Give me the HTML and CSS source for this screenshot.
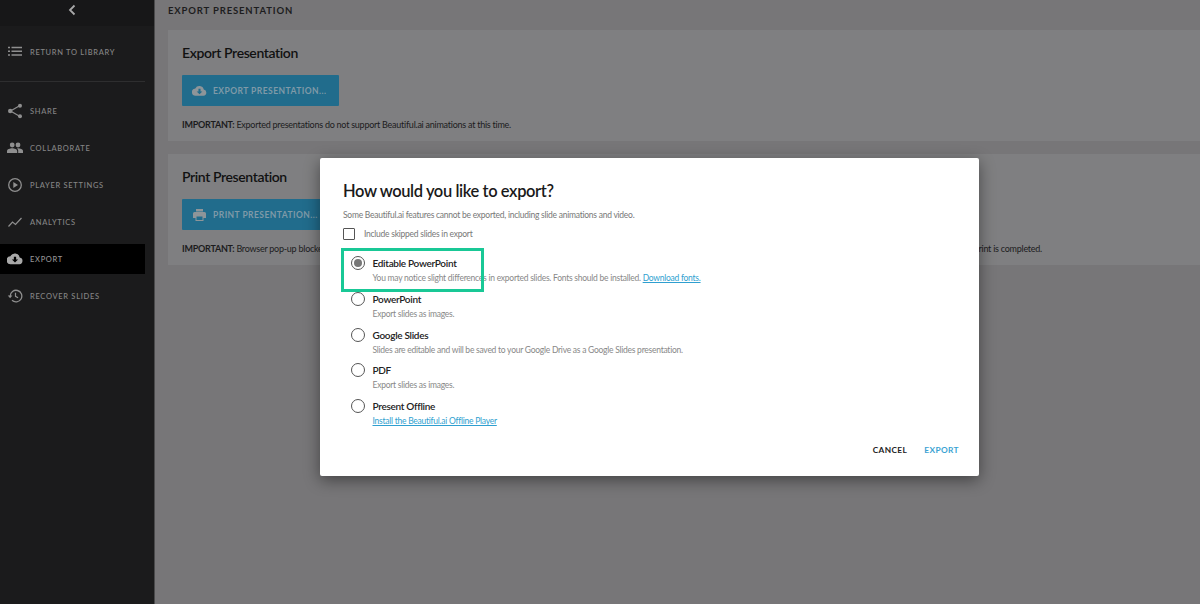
FILE: index.html
```html
<!DOCTYPE html>
<html>
<head>
    <title>Export Presentation</title>
    <link rel="stylesheet" href="styles.css">
</head>
<body>
    <div class="app">
        <div class="sidebar">
            <div class="back">
                <svg width="10" height="12" viewBox="0 0 10 12"><path d="M7.500 1.500 3 6l4.500 4.500" fill="none" stroke="#a8a8a8" stroke-width="1.800"/></svg>
            </div>
            <a class="nav-item top-item">
                <svg width="14" height="14" viewBox="0 0 14 14"><path d="M0 2.500h2M3.500 2.500H14M0 6.200h2M3.500 6.200H14M0 10h2M3.500 10H14" stroke="#8f8f8f" stroke-width="1.500"/></svg>
                <span>Return to Library</span>
            </a>
            <div class="divider"></div>
            <a class="nav-item">
                <svg width="16" height="16" viewBox="0 0 16 16"><path d="M13 2.500 3.500 8l9.500 5.500" fill="none" stroke="#8f8f8f" stroke-width="1.200"/><circle cx="13" cy="2.800" r="2" fill="#8f8f8f"/><circle cx="3.200" cy="8" r="2.200" fill="#8f8f8f"/><circle cx="13" cy="13.200" r="2" fill="#8f8f8f"/></svg>
                <span>Share</span>
            </a>
            <a class="nav-item">
                <svg width="16" height="16" viewBox="0 0 16 16"><circle cx="5.200" cy="5" r="2.400" fill="#8f8f8f"/><circle cx="11" cy="5" r="2.400" fill="#8f8f8f"/><path d="M0 13v-2c0-1.800 3-2.800 5.200-2.800s5 1 5 2.800v2zM11.200 13v-2.200c0-1-.5-1.800-1.200-2.500 2.500-.3 6 .6 6 2.500v2.200z" fill="#8f8f8f"/></svg>
                <span>Collaborate</span>
            </a>
            <a class="nav-item">
                <svg width="16" height="16" viewBox="0 0 16 16"><circle cx="8" cy="8" r="6.300" fill="none" stroke="#8f8f8f" stroke-width="1.300"/><path d="M6.300 5v6L11 8z" fill="#8f8f8f"/></svg>
                <span>Player Settings</span>
            </a>
            <a class="nav-item">
                <svg width="16" height="16" viewBox="0 0 16 16"><path d="M1.500 12.500 5.500 8l3 2.500 6-6.500" fill="none" stroke="#8f8f8f" stroke-width="1.200"/></svg>
                <span>Analytics</span>
            </a>
            <a class="nav-item active">
                <svg width="17" height="14" viewBox="0 0 17 14"><path d="M13.500 5.300A5.300 5.300 0 0 0 3.600 4 4.300 4.300 0 0 0 4.300 12.600h8.900a3.700 3.700 0 0 0 .3-7.300z" fill="#a8a8a8"/><path d="M7.300 4.500h2.400v3h2.100L8.500 10.800 5.200 7.500h2.100z" fill="#000"/></svg>
                <span>Export</span>
            </a>
            <a class="nav-item">
                <svg width="16" height="16" viewBox="0 0 16 16"><path d="M3.200 8a5.800 5.800 0 1 1 1.800 4.300" fill="none" stroke="#8f8f8f" stroke-width="1.300"/><path d="M.8 7.500h4.600L3.100 10.300z" fill="#8f8f8f"/><path d="M8.500 4.800v3.500l2.600 1.500" fill="none" stroke="#8f8f8f" stroke-width="1.200"/></svg>
                <span>Recover Slides</span>
            </a>
        </div>

        <div class="main">
            <div class="page-title">Export Presentation</div>
            <div class="card">
                <h2>Export Presentation</h2>
                <div class="big-button">
                    <svg width="15" height="12" viewBox="0 0 17 14"><path d="M13.500 5.300A5.300 5.300 0 0 0 3.600 4 4.300 4.300 0 0 0 4.300 12.600h8.900a3.700 3.700 0 0 0 .3-7.300z" fill="#8e9599"/><path d="M7.300 4.500h2.400v3h2.100L8.500 10.800 5.200 7.500h2.100z" fill="#216c8c"/></svg>
                    <span>Export Presentation...</span>
                </div>
                <p><b>IMPORTANT:</b> Exported presentations do not support Beautiful.ai animations at this time.</p>
            </div>
            <div class="card">
                <h2>Print Presentation</h2>
                <div class="big-button">
                    <svg width="13" height="12" viewBox="0 0 13 12"><path d="M3 0h7v2.500H3zM1.500 3h10A1.500 1.500 0 0 1 13 4.500V9h-2.500v3h-8V9H0V4.500A1.500 1.500 0 0 1 1.500 3z" fill="#8e9599"/><path d="M3.500 7.500h6v3.500h-6z" fill="#216c8c"/></svg>
                    <span>Print Presentation...</span>
                </div>
                <p class="print-note"><span><b>IMPORTANT:</b> Browser pop-up blockers may prevent this from opening.</span><span>Print is completed.</span></p>
            </div>
        </div>
    </div>

    <div class="dialog">
        <h1>How would you like to export?</h1>
        <div class="intro">Some Beautiful.ai features cannot be exported, including slide animations and video.</div>
        <label class="check-row"><span class="checkbox"></span>Include skipped slides in export</label>
        <div class="option">
            <span class="radio selected"></span>
            <div>
                <div class="option-name">Editable PowerPoint</div>
                <div class="option-desc">You may notice slight differences in exported slides. Fonts should be installed. <a>Download fonts.</a></div>
            </div>
        </div>
        <div class="option">
            <span class="radio"></span>
            <div>
                <div class="option-name">PowerPoint</div>
                <div class="option-desc">Export slides as images.</div>
            </div>
        </div>
        <div class="option">
            <span class="radio"></span>
            <div>
                <div class="option-name">Google Slides</div>
                <div class="option-desc">Slides are editable and will be saved to your Google Drive as a Google Slides presentation.</div>
            </div>
        </div>
        <div class="option">
            <span class="radio"></span>
            <div>
                <div class="option-name">PDF</div>
                <div class="option-desc">Export slides as images.</div>
            </div>
        </div>
        <div class="option">
            <span class="radio"></span>
            <div>
                <div class="option-name">Present Offline</div>
                <div class="option-desc"><a>Install the Beautiful.ai Offline Player</a></div>
            </div>
        </div>
        <div class="actions">
            <span class="cancel">Cancel</span>
            <span class="export">Export</span>
        </div>
        <div class="highlight"></div>
    </div>
</body>
</html>
```

FILE: styles.css
```css
* {
    box-sizing: border-box;
}
body {
    margin: 0;
    height: 604px;
    overflow: hidden;
    font-family: Lato, sans-serif;
    background: #777678;
}
.app {
    display: flex;
    height: 604px;
}
.sidebar {
    width: 155px;
    flex: none;
    background: #1b1b1c;
    border-right: 1px solid #4a4a4b;
}
.back {
    height: 26px;
    padding-left: 67px;
    background: #171718;
}
.nav-item {
    display: flex;
    align-items: center;
    gap: 7px;
    height: 30px;
    margin-bottom: 7px;
    padding-left: 7px;
    width: 145px;
    color: #858585;
    font-size: 7.500px;
    font-weight: 500;
    letter-spacing: 0.700px;
    text-transform: uppercase;
}
.nav-item svg {
    width: 16px;
    flex: none;
}
.nav-item.active {
    background: #000;
    color: #959595;
}
.top-item {
    margin-top: 11px;
    margin-bottom: 0;
}
.divider {
    width: 145px;
    height: 1px;
    margin: 14px 0 14px;
    background: #2e2e2f;
}
.main {
    flex: 1;
    padding-left: 13px;
    min-width: 0;
}
.page-title {
    height: 30px;
    padding-top: 5px;
    color: #1d1d1e;
    font-size: 9.500px;
    font-weight: 700;
    letter-spacing: 0.850px;
    text-transform: uppercase;
}
.card {
    height: 111px;
    margin-bottom: 13px;
    padding: 13px 0 0 14px;
    background: #7f7f81;
}
.card h2 {
    margin: 0 0 12px;
    color: #111;
    font-size: 14px;
    font-weight: 600;
    letter-spacing: -0.400px;
    line-height: 20px;
}
.big-button {
    display: flex;
    align-items: center;
    gap: 6px;
    width: 157px;
    height: 31px;
    padding-left: 10px;
    border-radius: 1px;
    background: #216c8c;
    color: #7f9aa8;
    font-size: 8.500px;
    font-weight: 700;
    letter-spacing: 0.450px;
    text-transform: uppercase;
    white-space: nowrap;
}
.big-button svg {
    width: 15px;
    flex: none;
}
.card p {
    margin: 12px 0 0;
    color: #1c1c1d;
    font-size: 9px;
    letter-spacing: -0.250px;
    line-height: 14px;
}
.card p b {
    font-weight: 700;
}
.print-note {
    display: flex;
    justify-content: space-between;
    padding-right: 158px;
}
.dialog {
    position: absolute;
    left: 319.500px;
    top: 158px;
    width: 659.500px;
    height: 318px;
    padding: 23px 23.500px 0;
    border-radius: 2px;
    background: #fff;
    box-shadow: 0 4px 16px rgba(0, 0, 0, 0.45);
}
.dialog h1 {
    margin: 0;
    color: #1a1a1a;
    font-size: 16.500px;
    font-weight: 600;
    letter-spacing: -0.400px;
    line-height: 20px;
}
.intro {
    margin-top: 8px;
    color: #777;
    font-size: 8.500px;
    letter-spacing: -0.250px;
    line-height: 12px;
}
.check-row {
    display: flex;
    align-items: center;
    gap: 9px;
    margin-top: 7px;
    color: #777;
    font-size: 8.500px;
    letter-spacing: -0.250px;
}
.checkbox {
    width: 12px;
    height: 12px;
    border: 1.500px solid #555;
    border-radius: 1px;
}
.option {
    display: flex;
    gap: 7.500px;
    height: 35.750px;
    margin-left: 8px;
}
.check-row + .option {
    margin-top: 16px;
}
.radio {
    width: 14px;
    height: 14px;
    flex: none;
    border: 1.500px solid #555;
    border-radius: 50%;
}
.radio.selected {
    padding: 2px;
    background: #777 content-box;
}
.option-name {
    color: #222;
    font-size: 10px;
    font-weight: 600;
    letter-spacing: -0.300px;
    line-height: 15px;
}
.option-desc {
    margin-top: 1px;
    color: #888;
    font-size: 8.500px;
    letter-spacing: -0.250px;
    line-height: 13px;
    white-space: nowrap;
}
.option-desc a {
    color: #2f9fd0;
    text-decoration: underline;
}
.actions {
    position: absolute;
    right: 20px;
    bottom: 21px;
    display: flex;
    gap: 17px;
    font-size: 8.300px;
    font-weight: 700;
    letter-spacing: 0.400px;
    text-transform: uppercase;
}
.cancel {
    color: #222;
}
.export {
    color: #3ba3d3;
}
.highlight {
    position: absolute;
    left: 21.500px;
    top: 90px;
    width: 143px;
    height: 44px;
    border: 3px solid #19c896;
}
```
